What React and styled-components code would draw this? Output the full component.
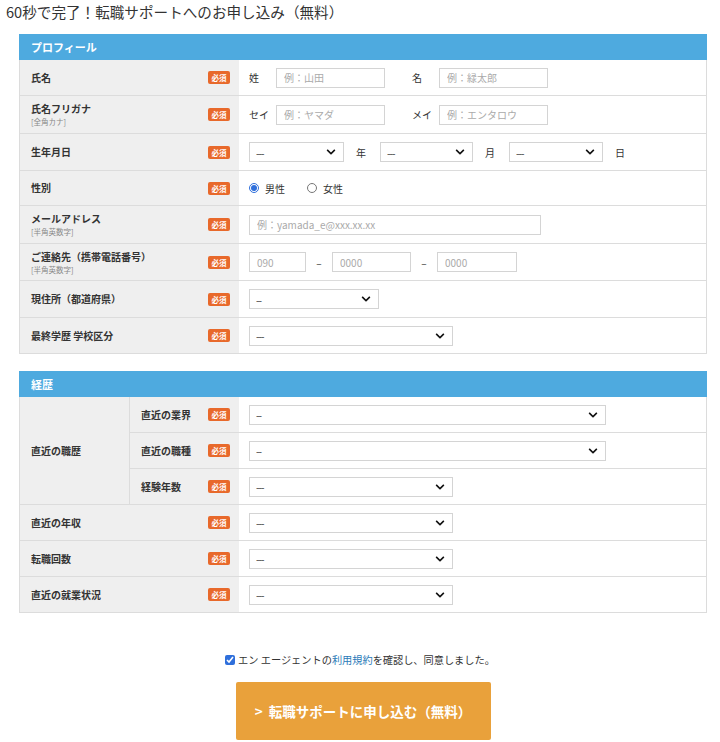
import React from "react";
import styled, { createGlobalStyle } from "styled-components";
import { FaChevronDown } from "react-icons/fa";

const GlobalStyle = createGlobalStyle`
  body {
    margin: 0;
    background: #fff;
    color: #333;
    font-family: "Noto Sans CJK JP", "Liberation Sans", sans-serif;
  }
`;

const Page = styled.div`
  padding-top: 4px;
`;

const Title = styled.h1`
  margin: 0;
  padding-left: 6px;
  font-size: 14.6px;
  line-height: 16px;
  font-weight: 400;
  color: #333;
`;

const Form = styled.div`
  margin: 14px 0 0 19px;
  width: 688px;
`;

const Section = styled.div`
  border: 1px solid #dcdcdc;
  border-top: none;
  margin-top: ${(p) => p.$top || 0}px;
`;

const Header = styled.div`
  height: 26px;
  line-height: 26px;
  background: #4eaadf;
  color: #fff;
  font-size: 11px;
  font-weight: 700;
  padding-left: 12px;
  margin: 0 -1px;
`;

const Row = styled.div`
  display: flex;
  height: ${(p) => p.$h || 35}px;
  border-top: ${(p) => (p.$line ? "1px solid #dcdcdc" : "none")};
  & + & {
    border-top: 1px solid #dcdcdc;
  }
`;

const LabelCell = styled.div`
  width: ${(p) => p.$w || 219}px;
  flex: none;
  background: #efefef;
  display: flex;
  align-items: center;
  justify-content: space-between;
  padding: 0 9px 0 11px;
  box-sizing: border-box;
  border-right: ${(p) => (p.$divider ? "1px solid #dcdcdc" : "none")};
`;

const LabelText = styled.div`
  display: flex;
  flex-direction: column;
  gap: 2px;
  font-size: 10px;
  font-weight: 700;
  line-height: 12px;
  color: #333;
`;

const SubText = styled.span`
  font-size: 7.5px;
  font-weight: 400;
  color: #888;
  line-height: 9px;
`;

const Badge = styled.span`
  background: #e8692b;
  color: #fff;
  font-size: 7.5px;
  font-weight: 700;
  width: 22px;
  height: 13px;
  line-height: 13px;
  text-align: center;
  border-radius: 2px;
  flex: none;
`;

const ValueCell = styled.div`
  flex: 1;
  display: flex;
  align-items: center;
  padding-left: 10px;
  gap: ${(p) => p.$gap || 0}px;
  font-size: 10px;
  color: #333;
`;

const Prefix = styled.span`
  width: 27px;
  font-size: 10px;
`;

const Input = styled.input`
  width: ${(p) => p.$w}px;
  height: 20px;
  box-sizing: border-box;
  border: 1px solid #d4d4d4;
  padding: 0 7px;
  font-family: inherit;
  font-size: 10px;
  color: #333;
  margin-right: ${(p) => p.$mr || 0}px;
  &::placeholder {
    color: #aaa;
  }
`;

const SelectWrap = styled.span`
  position: relative;
  display: inline-block;
  width: ${(p) => p.$w}px;
  height: 20px;
  flex: none;
  svg {
    position: absolute;
    right: 8px;
    top: 5px;
    pointer-events: none;
  }
`;

const SelectBox = styled.select`
  appearance: none;
  width: 100%;
  height: 20px;
  box-sizing: border-box;
  border: 1px solid #d4d4d4;
  background: #fff;
  padding: 0 6px;
  font-family: inherit;
  font-size: 10px;
  letter-spacing: -1px;
  color: #333;
`;

const Unit = styled.span`
  font-size: 10px;
  margin-right: 2px;
`;

const RadioLabel = styled.label`
  display: flex;
  align-items: center;
  gap: 6px;
  font-size: 10px;
  margin-right: 22px;
  input {
    margin: 0;
    width: 10px;
    height: 10px;
    accent-color: #2f6fdb;
  }
`;

const Dash = styled.span`
  font-size: 10px;
  width: 8px;
  text-align: center;
`;

const Split = styled.div`
  display: flex;
`;

const SubRows = styled.div`
  flex: 1;
  display: flex;
  flex-direction: column;
`;

const Agree = styled.label`
  display: flex;
  align-items: center;
  justify-content: center;
  gap: 3px;
  margin-top: 40px;
  margin-left: -6px;
  font-size: 10.2px;
  line-height: 14px;
  color: #333;
  input {
    margin: 0;
    width: 10px;
    height: 10px;
    accent-color: #2f6fdb;
  }
  a {
    color: #2a7ab8;
    text-decoration: none;
  }
`;

const ButtonRow = styled.div`
  display: flex;
  justify-content: center;
  margin-top: 15px;
`;

const Submit = styled.button`
  width: 255px;
  height: 58px;
  border: none;
  border-radius: 2px;
  background: #e9a13b;
  color: #fff;
  font-family: inherit;
  font-size: 13.5px;
  font-weight: 700;
`;

const Select = ({ w, value }) => (
  <SelectWrap $w={w}>
    <SelectBox defaultValue={value}>
      <option>{value}</option>
    </SelectBox>
    <FaChevronDown size={10} color="#111" />
  </SelectWrap>
);

const Label = ({ children, sub, w, divider }) => (
  <LabelCell $w={w} $divider={divider}>
    <LabelText>
      <span>{children}</span>
      {sub && <SubText>{sub}</SubText>}
    </LabelText>
    <Badge>必須</Badge>
  </LabelCell>
);

const App = () => {
  return (
    <Page>
      <GlobalStyle />
      <Title>60秒で完了！転職サポートへのお申し込み（無料）</Title>
      <Form>
        <Section>
          <Header>プロフィール</Header>
          <Row $h={35}>
            <Label>氏名</Label>
            <ValueCell>
              <Prefix>姓</Prefix>
              <Input $w={109} $mr={27} placeholder="例：山田" />
              <Prefix>名</Prefix>
              <Input $w={109} placeholder="例：緑太郎" />
            </ValueCell>
          </Row>
          <Row $h={37}>
            <Label sub="[全角カナ]">氏名フリガナ</Label>
            <ValueCell>
              <Prefix>セイ</Prefix>
              <Input $w={109} $mr={27} placeholder="例：ヤマダ" />
              <Prefix>メイ</Prefix>
              <Input $w={109} placeholder="例：エンタロウ" />
            </ValueCell>
          </Row>
          <Row $h={36}>
            <Label>生年月日</Label>
            <ValueCell $gap={12}>
              <Select w={95} value="---" />
              <Unit>年</Unit>
              <Select w={93} value="---" />
              <Unit>月</Unit>
              <Select w={94} value="---" />
              <Unit>日</Unit>
            </ValueCell>
          </Row>
          <Row $h={34}>
            <Label>性別</Label>
            <ValueCell>
              <RadioLabel>
                <input type="radio" name="sex" defaultChecked />
                男性
              </RadioLabel>
              <RadioLabel>
                <input type="radio" name="sex" />
                女性
              </RadioLabel>
            </ValueCell>
          </Row>
          <Row $h={37}>
            <Label sub="[半角英数字]">メールアドレス</Label>
            <ValueCell>
              <Input $w={292} placeholder="例：yamada_e@xxx.xx.xx" />
            </ValueCell>
          </Row>
          <Row $h={36}>
            <Label sub="[半角英数字]">ご連絡先（携帯電話番号）</Label>
            <ValueCell $gap={9}>
              <Input $w={57} placeholder="090" />
              <Dash>–</Dash>
              <Input $w={79} placeholder="0000" />
              <Dash>–</Dash>
              <Input $w={80} placeholder="0000" />
            </ValueCell>
          </Row>
          <Row $h={36}>
            <Label>現住所（都道府県）</Label>
            <ValueCell>
              <Select w={130} value="--" />
            </ValueCell>
          </Row>
          <Row $h={35}>
            <Label>最終学歴 学校区分</Label>
            <ValueCell>
              <Select w={204} value="---" />
            </ValueCell>
          </Row>
        </Section>

        <Section $top={17}>
          <Header>経歴</Header>
          <Split>
            <LabelCell $w={110} $divider>
              <LabelText>直近の職歴</LabelText>
            </LabelCell>
            <SubRows>
              <Row $h={35}>
                <Label w={109}>直近の業界</Label>
                <ValueCell>
                  <Select w={357} value="--" />
                </ValueCell>
              </Row>
              <Row $h={35}>
                <Label w={109}>直近の職種</Label>
                <ValueCell>
                  <Select w={357} value="--" />
                </ValueCell>
              </Row>
              <Row $h={35}>
                <Label w={109}>経験年数</Label>
                <ValueCell>
                  <Select w={204} value="---" />
                </ValueCell>
              </Row>
            </SubRows>
          </Split>
          <Row $h={35} $line>
            <Label>直近の年収</Label>
            <ValueCell>
              <Select w={204} value="---" />
            </ValueCell>
          </Row>
          <Row $h={35}>
            <Label>転職回数</Label>
            <ValueCell>
              <Select w={204} value="---" />
            </ValueCell>
          </Row>
          <Row $h={35}>
            <Label>直近の就業状況</Label>
            <ValueCell>
              <Select w={204} value="---" />
            </ValueCell>
          </Row>
        </Section>

        <Agree>
          <input type="checkbox" defaultChecked />
          <span>
            エン エージェントの<a href="#">利用規約</a>を確認し、同意しました。
          </span>
        </Agree>
        <ButtonRow>
          <Submit>&gt;&nbsp; 転職サポートに申し込む（無料）</Submit>
        </ButtonRow>
      </Form>
    </Page>
  );
};

export default App;
